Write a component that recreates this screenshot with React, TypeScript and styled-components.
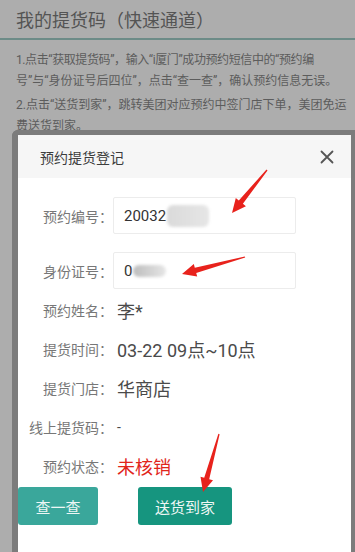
import React from "react";
import styled, { createGlobalStyle } from "styled-components";

const FONT = `Roboto, "Noto Sans CJK SC", "Noto Sans", sans-serif`;

const GlobalStyle = createGlobalStyle`
  html, body {
    margin: 0;
    padding: 0;
    background: #adadad;
  }
  body {
    font-family: ${FONT};
    overflow: hidden;
  }
`;

type Point = [number, number];

// tapered red annotation arrow, from tail to tip
const arrowPoints = (tail: Point, tip: Point) => {
  const dx = tip[0] - tail[0];
  const dy = tip[1] - tail[1];
  const len = Math.hypot(dx, dy);
  const ux = dx / len;
  const uy = dy / len;
  const nx = -uy;
  const ny = ux;
  const headLen = 14;
  const headHalf = 6.5;
  const shaftHalf = 2.6;
  const bx = tip[0] - ux * headLen;
  const by = tip[1] - uy * headLen;
  const pts: Point[] = [
    [tail[0] + nx * 0.6, tail[1] + ny * 0.6],
    [bx + nx * shaftHalf, by + ny * shaftHalf],
    [bx + nx * headHalf, by + ny * headHalf],
    tip,
    [bx - nx * headHalf, by - ny * headHalf],
    [bx - nx * shaftHalf, by - ny * shaftHalf],
    [tail[0] - nx * 0.6, tail[1] - ny * 0.6],
  ];
  return pts.map(p => `${p[0].toFixed(1)},${p[1].toFixed(1)}`).join(" ");
};

const ARROWS: { tail: Point; tip: Point }[] = [
  { tail: [267, 170], tip: [232, 213] },
  { tail: [245, 257], tip: [182, 274] },
  { tail: [219, 434], tip: [203, 492] },
];

const INFO_ROWS = [
  { label: "预约姓名：", value: "李*" },
  { label: "提货时间：", value: "03-22 09点~10点" },
  { label: "提货门店：", value: "华商店" },
  { label: "线上提货码：", value: "-", small: true },
  { label: "预约状态：", value: "未核销", danger: true },
];

export default function App() {
  return (
    <Page>
      <GlobalStyle />
      <PageHeader>我的提货码（快速通道）</PageHeader>
      <Notice>
        <NoticeParagraph>
          <NoticeLine $tight>1.点击“获取提货码”，输入“i厦门”成功预约短信中的“预约编</NoticeLine>
          <NoticeLine>号”与“身份证号后四位”，点击“查一查”，确认预约信息无误。</NoticeLine>
        </NoticeParagraph>
        <NoticeParagraph>
          <NoticeLine>2.点击“送货到家”，跳转美团对应预约中签门店下单，美团免运</NoticeLine>
          <NoticeLine>费送货到家。</NoticeLine>
        </NoticeParagraph>
      </Notice>

      <ModalFrame>
        <ModalHeader>
          <ModalTitle>预约提货登记</ModalTitle>
          <CloseButton aria-label="关闭">
            <svg width="14" height="14" viewBox="0 0 14 14">
              <path
                d="M1.5 1.5 L12.5 12.5 M12.5 1.5 L1.5 12.5"
                stroke="#555"
                strokeWidth="1.8"
                strokeLinecap="round"
              />
            </svg>
          </CloseButton>
        </ModalHeader>

        <Form>
          <InputRow>
            <Label>预约编号：</Label>
            <InputBox>
              20032
              <Blur $w={42} $h={22} $tone="#dadada" />
            </InputBox>
          </InputRow>
          <InputRow>
            <Label>身份证号：</Label>
            <InputBox>
              0
              <Blur $w={33} $h={12} $tone="#bdbdbd" />
            </InputBox>
          </InputRow>
          {INFO_ROWS.map(row => (
            <InfoRow key={row.label}>
              <Label>{row.label}</Label>
              <Value $danger={row.danger} $small={row.small}>
                {row.value}
              </Value>
            </InfoRow>
          ))}
        </Form>

        <Actions>
          <ActionButton $tone="#3aa79b" $width={80}>
            查一查
          </ActionButton>
          <ActionButton $tone="#16957f" $width={94}>
            送货到家
          </ActionButton>
        </Actions>
      </ModalFrame>

      <Annotations width="355" height="552" viewBox="0 0 355 552">
        {ARROWS.map((a, i) => (
          <polygon key={i} points={arrowPoints(a.tail, a.tip)} fill="#e8221c" />
        ))}
      </Annotations>
    </Page>
  );
}

const Page = styled.div`
  position: relative;
  width: 355px;
  height: 552px;
  overflow: hidden;
  background: #adadad;
  font-family: ${FONT};
`;

const PageHeader = styled.div`
  height: 38px;
  padding-left: 16px;
  display: flex;
  align-items: center;
  font-size: 18px;
  color: #545454;
  border-bottom: 2px solid #6c8b87;
`;

const Notice = styled.div`
  padding: 10px 0 0 16px;
  color: #5c5c5c;
  font-size: 12px;
`;

const NoticeParagraph = styled.div`
  margin-bottom: 3px;
`;

const NoticeLine = styled.div<{ $tight?: boolean }>`
  white-space: nowrap;
  line-height: 21px;
  letter-spacing: ${p => (p.$tight ? "-0.4px" : "0")};
`;

const ModalFrame = styled.div`
  position: absolute;
  top: 130px;
  left: 12px;
  right: 0;
  bottom: 0;
  background: #fff;
  border: 6px solid #7c7c7c;
  border-right-width: 4px;
  border-bottom: none;
  border-radius: 6px 0 0 0;
  display: flex;
  flex-direction: column;
`;

const ModalHeader = styled.div`
  height: 43px;
  margin-top: -1px;
  background: #f6f6f6;
  display: flex;
  align-items: center;
  justify-content: space-between;
  padding: 0 17px 0 22px;
`;

const ModalTitle = styled.div`
  font-size: 14px;
  color: #3c3c3c;
`;

const CloseButton = styled.div`
  display: flex;
  align-items: center;
`;

const Form = styled.div`
  display: flex;
  flex-direction: column;
  padding-top: 19px;
`;

const InputRow = styled.div`
  display: grid;
  grid-template-columns: 95px 183px;
  align-items: center;
  height: 37px;
  margin-bottom: 18px;

  &:nth-child(2) {
    margin-bottom: 1px;
  }
`;

const InfoRow = styled.div`
  display: grid;
  grid-template-columns: 95px auto;
  align-items: center;
  height: 39px;
`;

const Label = styled.div`
  text-align: right;
  font-size: 14px;
  color: #777;
  white-space: nowrap;
`;

const InputBox = styled.div`
  height: 37px;
  box-sizing: border-box;
  border: 1px solid #ececec;
  border-radius: 2px;
  padding-left: 10px;
  display: flex;
  align-items: center;
  font-size: 15px;
  color: #333;
`;

const Blur = styled.span<{ $w: number; $h: number; $tone: string }>`
  display: inline-block;
  width: ${p => p.$w}px;
  height: ${p => p.$h}px;
  margin-left: 1px;
  border-radius: 6px;
  background: linear-gradient(90deg, ${p => p.$tone}, #e6e6e6);
  filter: blur(1.5px);
`;

const Value = styled.div<{ $danger?: boolean; $small?: boolean }>`
  padding-left: 4px;
  font-size: ${p => (p.$small ? 14 : 18)}px;
  color: ${p => (p.$danger ? "#e1251b" : "#4a4a4a")};
`;

const Actions = styled.div`
  display: flex;
  gap: 40px;
  margin-top: 2px;
`;

const ActionButton = styled.div<{ $tone: string; $width: number }>`
  width: ${p => p.$width}px;
  height: 38px;
  border-radius: 3px;
  background: ${p => p.$tone};
  color: #eef7f5;
  font-size: 15px;
  display: flex;
  align-items: center;
  justify-content: center;
`;

const Annotations = styled.svg`
  position: absolute;
  top: 0;
  left: 0;
  pointer-events: none;
`;
